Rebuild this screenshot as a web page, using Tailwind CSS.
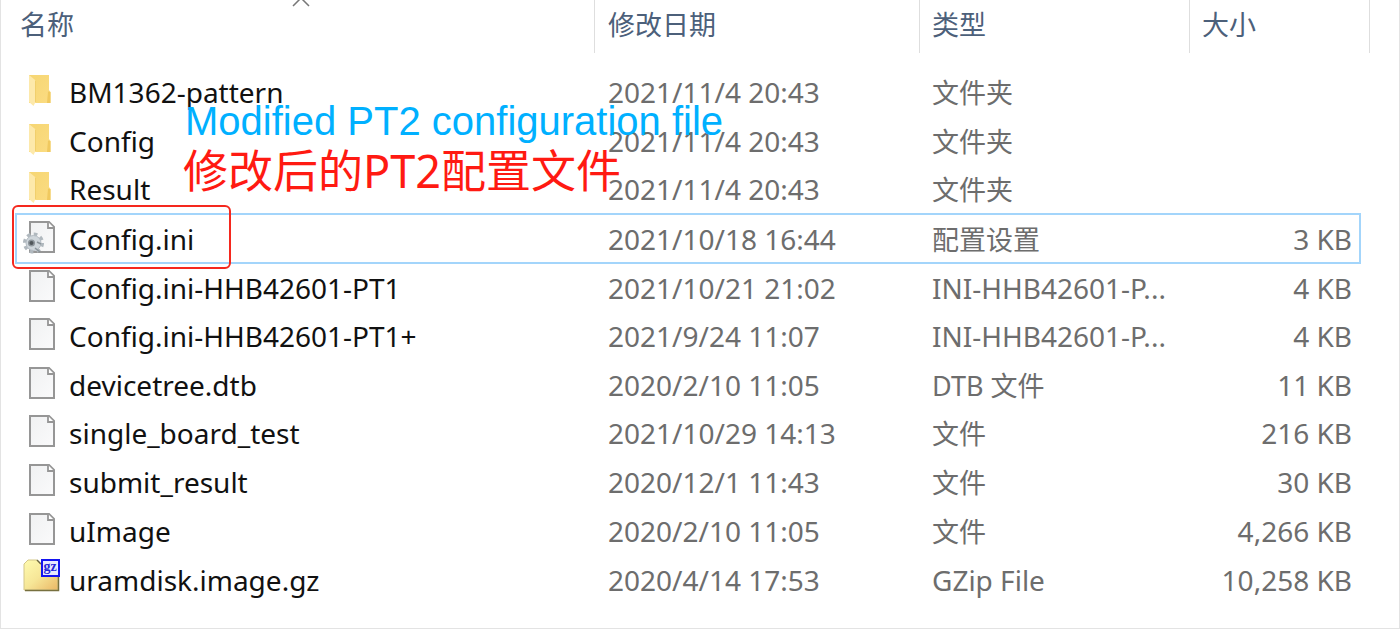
<!DOCTYPE html>
<html lang="zh-CN">
<head>
    <meta charset="UTF-8">
    <meta name="viewport" content="width=device-width, initial-scale=1.0">
    <title>PT2 文件列表</title>
    <script src="https://cdn.jsdelivr.net/npm/@tailwindcss/browser@4"></script>
    <style>
        body {
            font-family: 'Noto Sans', 'Noto Sans CJK SC', sans-serif;
        }
    </style>
</head>
<body class="bg-white text-[#6d6d6d]">

    <!-- Shared icons -->
    <svg class="absolute size-0" aria-hidden="true">
        <defs>
            <linearGradient id="folder-fill" x1="0" y1="0" x2="1" y2="1">
                <stop offset="0" stop-color="#f6d673"/>
                <stop offset="1" stop-color="#fbdc82"/>
            </linearGradient>
            <linearGradient id="page-fill" x1="0" y1="0" x2="1" y2="1">
                <stop offset="0" stop-color="#f0f1f2"/>
                <stop offset="1" stop-color="#fafafb"/>
            </linearGradient>
            <linearGradient id="gz-fill" x1="0" y1="0" x2="1" y2="1">
                <stop offset="0" stop-color="#fffbb0"/>
                <stop offset="0.5" stop-color="#f6e697"/>
                <stop offset="1" stop-color="#eab765"/>
            </linearGradient>
            <symbol id="icon-folder" viewBox="0 0 38 44">
                <path d="M6 5H26V20L27.500 22V33H6Z" fill="url(#folder-fill)"/>
                <path d="M25 21.500L27.500 22V33H24Z" fill="#f0c95f"/>
                <path d="M6 5L11.500 9.500Q12.500 10.500 12.500 12V32L10.500 36L6 32Z" fill="#fde9ab"/>
                <path d="M12.500 11V32" stroke="#f1cf6c" fill="none"/>
            </symbol>
            <symbol id="icon-page" viewBox="0 0 38 44">
                <path d="M7 5H26L31 10V35H7Z" fill="url(#page-fill)" stroke="#969696" stroke-width="2"/>
                <path d="M25 5V11H31" fill="#fff" stroke="#969696" stroke-width="1.800"/>
            </symbol>
            <symbol id="icon-config" viewBox="0 0 38 44">
                <path d="M7 5H26L31 10V35H7Z" fill="url(#page-fill)" stroke="#969696" stroke-width="2"/>
                <path d="M25 5V11H31" fill="#fff" stroke="#969696" stroke-width="1.800"/>
                <circle cx="10.500" cy="26" r="8.800" fill="none" stroke="#b0b8be" stroke-width="3.500" stroke-dasharray="3.600 3.310"/>
                <circle cx="10.500" cy="26" r="7.500" fill="#cfd6db" stroke="#b3bbc2"/>
                <circle cx="8.500" cy="26" r="2.800" fill="#50565a" stroke="#8f979d" stroke-width="1.500"/>
                <path d="M12 31L17 35M14 25L18 27" stroke="#8b949a" stroke-width="1.500"/>
            </symbol>
            <symbol id="icon-gz" viewBox="0 0 38 44">
                <path d="M1 6L5 2H14L17 6H35V32H1Z" fill="url(#gz-fill)" stroke="#d3c688"/>
                <path d="M2 32.500H35.500V19" fill="none" stroke="#77703f" stroke-width="1.500"/>
                <path d="M14 2L18 6" stroke="#6b6640" stroke-width="1.500"/>
                <rect x="19" y="2" width="17" height="16" fill="#e8e8ff" stroke="#1414f0" stroke-width="2"/>
                <text x="20.500" y="12.500" font-family="Liberation Serif, serif" font-size="14" font-weight="bold" fill="#2626d8">gz</text>
            </symbol>
        </defs>
    </svg>

    <main class="relative min-h-screen border-x border-b border-[#e3e3e3] pl-3.5 pr-[29px]">
        <table class="w-full table-fixed border-separate border-spacing-0 text-[28px] leading-10 whitespace-nowrap">
            <colgroup>
                <col>
                <col class="w-[325px]">
                <col class="w-[270px]">
                <col class="w-[171px]">
                <col class="w-[9px]">
            </colgroup>
            <thead class="text-left text-[27px] text-[#4c607a]">
                <tr class="h-[68px]">
                    <th scope="col" class="relative p-0 align-top font-normal" aria-sort="ascending">
                        <div class="flex h-[53px] items-center border-r border-[#dedede] pb-1 pl-[5px]">名称</div>
                        <svg class="absolute left-1/2 top-0 -ml-3.5 h-[7px] w-5" viewBox="0 0 20 7" fill="none" stroke="#777" stroke-width="1.500" aria-hidden="true"><path d="M2 6L10 -2L18 6"/></svg>
                    </th>
                    <th scope="col" class="p-0 align-top font-normal"><div class="flex h-[53px] items-center border-r border-[#dedede] pb-1 pl-[13px]">修改日期</div></th>
                    <th scope="col" class="p-0 align-top font-normal"><div class="flex h-[53px] items-center border-r border-[#dedede] pb-1 pl-3">类型</div></th>
                    <th scope="col" class="p-0 align-top font-normal"><div class="flex h-[53px] items-center pb-1 pl-3">大小</div></th>
                    <td class="p-0 align-top"><div class="h-[53px] border-r border-[#dedede]"></div></td>
                </tr>
            </thead>
            <tbody>
                <tr class="h-12">
                    <td class="p-0"><div class="flex items-center gap-2 pl-2 text-[#111]"><svg class="h-11 w-[38px] shrink-0" aria-hidden="true"><use href="#icon-folder"/></svg>BM1362-pattern</div></td>
                    <td class="p-0 pl-[13px]">2021/11/4 20:43</td>
                    <td class="p-0 pl-3 pt-0.5 text-[27px]">文件夹</td>
                    <td class="p-0"></td>
                </tr>
                <tr class="h-[49px]">
                    <td class="p-0"><div class="flex items-center gap-2 pl-2 text-[#111]"><svg class="h-11 w-[38px] shrink-0" aria-hidden="true"><use href="#icon-folder"/></svg>Config</div></td>
                    <td class="p-0 pl-[13px]">2021/11/4 20:43</td>
                    <td class="p-0 pl-3 pt-0.5 text-[27px]">文件夹</td>
                    <td class="p-0"></td>
                </tr>
                <tr class="h-12">
                    <td class="p-0"><div class="flex items-center gap-2 pl-2 text-[#111]"><svg class="h-11 w-[38px] shrink-0" aria-hidden="true"><use href="#icon-folder"/></svg>Result</div></td>
                    <td class="p-0 pl-[13px]">2021/11/4 20:43</td>
                    <td class="p-0 pl-3 pt-0.5 text-[27px]">文件夹</td>
                    <td class="p-0"></td>
                </tr>
                <tr class="h-[51px]" aria-selected="true">
                    <td class="relative border-y-2 border-l-2 border-[#a3d5fb] p-0">
                        <div class="flex items-center gap-2 pl-1.5 text-[#111]"><svg class="h-11 w-[38px] shrink-0" aria-hidden="true"><use href="#icon-config"/></svg>Config.ini</div>
                        <!-- Red marker around the edited file -->
                        <div class="absolute -left-[5px] -top-2.5 h-16 w-[219px] rounded-md border-2 border-[#f5281e]"></div>
                    </td>
                    <td class="border-y-2 border-[#a3d5fb] p-0 pl-[13px]">2021/10/18 16:44</td>
                    <td class="border-y-2 border-[#a3d5fb] p-0 pl-3 pt-0.5 text-[27px]">配置设置</td>
                    <td class="border-y-2 border-r-2 border-[#a3d5fb] p-0 pr-[7px] text-right">3 KB</td>
                </tr>
                <tr class="h-12">
                    <td class="p-0"><div class="flex items-center gap-2 pl-2 text-[#111]"><svg class="h-11 w-[38px] shrink-0" aria-hidden="true"><use href="#icon-page"/></svg>Config.ini-HHB42601-PT1</div></td>
                    <td class="p-0 pl-[13px]">2021/10/21 21:02</td>
                    <td class="p-0 pl-3">INI-HHB42601-P...</td>
                    <td class="p-0 pr-[9px] text-right">4 KB</td>
                </tr>
                <tr class="h-12">
                    <td class="p-0"><div class="flex items-center gap-2 pl-2 text-[#111]"><svg class="h-11 w-[38px] shrink-0" aria-hidden="true"><use href="#icon-page"/></svg>Config.ini-HHB42601-PT1+</div></td>
                    <td class="p-0 pl-[13px]">2021/9/24 11:07</td>
                    <td class="p-0 pl-3">INI-HHB42601-P...</td>
                    <td class="p-0 pr-[9px] text-right">4 KB</td>
                </tr>
                <tr class="h-[49px]">
                    <td class="p-0"><div class="flex items-center gap-2 pl-2 text-[#111]"><svg class="h-11 w-[38px] shrink-0" aria-hidden="true"><use href="#icon-page"/></svg>devicetree.dtb</div></td>
                    <td class="p-0 pl-[13px]">2020/2/10 11:05</td>
                    <td class="p-0 pl-3 pt-0.5 text-[27px]">DTB 文件</td>
                    <td class="p-0 pr-[9px] text-right">11 KB</td>
                </tr>
                <tr class="h-12">
                    <td class="p-0"><div class="flex items-center gap-2 pl-2 text-[#111]"><svg class="h-11 w-[38px] shrink-0" aria-hidden="true"><use href="#icon-page"/></svg>single_board_test</div></td>
                    <td class="p-0 pl-[13px]">2021/10/29 14:13</td>
                    <td class="p-0 pl-3 pt-0.5 text-[27px]">文件</td>
                    <td class="p-0 pr-[9px] text-right">216 KB</td>
                </tr>
                <tr class="h-[49px]">
                    <td class="p-0"><div class="flex items-center gap-2 pl-2 text-[#111]"><svg class="h-11 w-[38px] shrink-0" aria-hidden="true"><use href="#icon-page"/></svg>submit_result</div></td>
                    <td class="p-0 pl-[13px]">2020/12/1 11:43</td>
                    <td class="p-0 pl-3 pt-0.5 text-[27px]">文件</td>
                    <td class="p-0 pr-[9px] text-right">30 KB</td>
                </tr>
                <tr class="h-[49px]">
                    <td class="p-0"><div class="flex items-center gap-2 pl-2 text-[#111]"><svg class="h-11 w-[38px] shrink-0" aria-hidden="true"><use href="#icon-page"/></svg>uImage</div></td>
                    <td class="p-0 pl-[13px]">2020/2/10 11:05</td>
                    <td class="p-0 pl-3 pt-0.5 text-[27px]">文件</td>
                    <td class="p-0 pr-[9px] text-right">4,266 KB</td>
                </tr>
                <tr class="h-[49px]">
                    <td class="p-0"><div class="flex items-center gap-2 pl-2 text-[#111]"><svg class="h-11 w-[38px] shrink-0" aria-hidden="true"><use href="#icon-gz"/></svg>uramdisk.image.gz</div></td>
                    <td class="p-0 pl-[13px]">2020/4/14 17:53</td>
                    <td class="p-0 pl-3">GZip File</td>
                    <td class="p-0 pr-[9px] text-right">10,258 KB</td>
                </tr>
            </tbody>
        </table>

        <!-- Notes written over the list -->
        <div class="absolute left-[182px] top-[97px] whitespace-nowrap">
            <p lang="en" class="pl-0.5 font-['Liberation_Sans',Arial,sans-serif] text-[40px] leading-[48px] text-[#00b0ff]">Modified PT2 configuration file</p>
            <p class="text-[45px] leading-[52px] text-[#ff1a12]">修改后的PT2配置文件</p>
        </div>
    </main>

</body>
</html>
